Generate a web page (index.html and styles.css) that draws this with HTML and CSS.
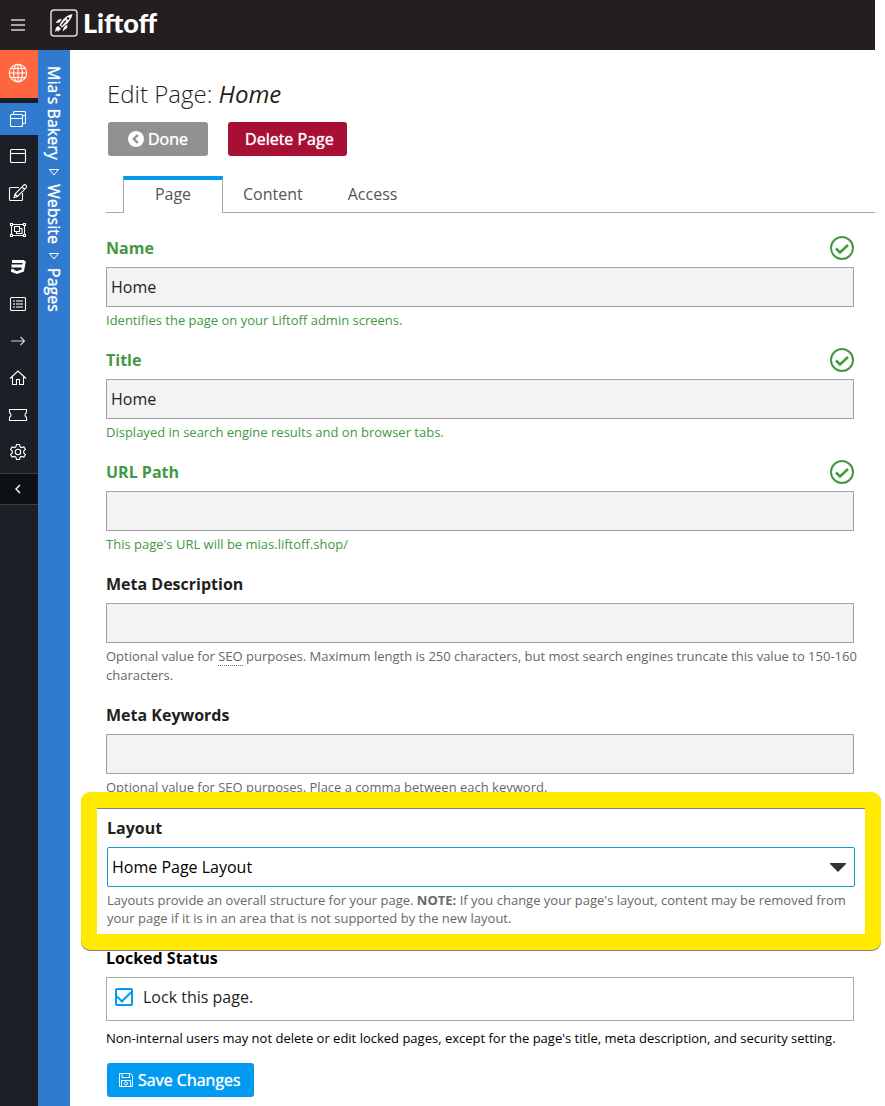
FILE: index.html
```html
<!DOCTYPE html>
<html lang="en">
<head>
<meta charset="utf-8">
<meta name="viewport" content="width=device-width, initial-scale=1">
<title>Edit Page: Home</title>
<link rel="stylesheet" href="styles.css">
</head>
<body>
<svg class="sprite" aria-hidden="true">
  <symbol id="ok" viewBox="0 0 24 24"><circle cx="12" cy="12" r="11"/><path d="M6 12.500l4 4L18 9" stroke-width="2.600"/></symbol>
</svg>
<div class="app">
  <header class="topbar">
    <button class="menu" type="button" aria-label="Menu">
      <svg width="14" height="12" viewBox="0 0 14 12"><path d="M0 1h14M0 6h14M0 11h14" stroke="#a6a4a5" stroke-width="2"/></svg>
    </button>
    <a class="logo" href="#">
      <svg width="28" height="28" viewBox="0 0 28 28" fill="none">
        <rect x="1" y="1" width="26" height="26" rx="3" stroke="#ddd" stroke-width="1.500"/>
        <path d="M22.500 5c-4.500 1-8 3.500-10.500 7L9.500 16l2.500 2.500 3.500-2.500C19 13 21.500 9.500 22.500 5z" fill="#fff"/>
        <path d="M12 10l-3.500.5L5.500 14l4-.5zM17.500 15.500L17 19l-4.500 3.500 1.500-4.500zM8.500 17L6 18.500l-1 4.500 2.500-2v2l3.500-3z" fill="#fff"/>
        <path d="M11.500 16.500l4.500-5" stroke="#231f20" stroke-width="1.200"/>
        <circle cx="18" cy="9.500" r="1.300" fill="#231f20"/>
      </svg>
      <span>Liftoff</span>
    </a>
  </header>

  <nav class="rail" aria-label="Tools">
    <a class="tool site" href="#" aria-label="Site"><svg width="20" height="20" viewBox="0 0 20 20"><circle cx="10" cy="10" r="8.700"/><ellipse cx="10" cy="10" rx="4.500" ry="8.700"/><path d="M10 1.300v17.400M1.300 10h17.400M2.800 5.500h14.400M2.800 14.500h14.400"/></svg></a>
    <a class="tool current" href="#" aria-label="Pages"><svg width="18" height="18" viewBox="0 0 18 18"><rect x="1.500" y="4.500" width="12" height="12" rx="1"/><path d="M1.500 8.500h12M4.500 4.500v-2a1 1 0 0 1 1-1h10a1 1 0 0 1 1 1v10a1 1 0 0 1-1 1h-2M13.500 5.500h3"/></svg></a>
    <a class="tool" href="#" aria-label="Layouts"><svg width="18" height="18" viewBox="0 0 18 18"><rect x="1.500" y="2.500" width="15" height="13" rx="1"/><path d="M1.500 6.500h15"/></svg></a>
    <a class="tool" href="#" aria-label="Edit"><svg width="20" height="18" viewBox="0 0 20 18"><path d="M11 3.500H2.500a1 1 0 0 0-1 1v11a1 1 0 0 0 1 1h11a1 1 0 0 0 1-1V9M15.500 1.300a1.800 1.800 0 0 1 2.500 0 1.800 1.800 0 0 1 0 2.500L9.500 12.500l-3.500 1.200 1-3.700zM14 3l2.500 2.500M7 10l2.500 2.500"/></svg></a>
    <a class="tool" href="#" aria-label="Blocks"><svg width="18" height="18" viewBox="0 0 18 18"><path d="M3.500 3.500h11M3.500 14.500h11M2.500 4.500v9M15.500 4.500v9M1.500 2.500h2v2h-2zM14.500 2.500h2v2h-2zM1.500 13.500h2v2h-2zM14.500 13.500h2v2h-2zM5.500 5.500h5v5h-5zM10.500 7.500h2.500v5H7.500v-2"/></svg></a>
    <a class="tool" href="#" aria-label="Stylesheets"><svg width="18" height="18" viewBox="0 0 18 18"><path d="M3 3.500h12.300M2.500 8h12M15.500 3l-1.800 9.500L8 14.500l-4.500-1.700.4-1.800" stroke-width="2.800"/></svg></a>
    <a class="tool" href="#" aria-label="Lists"><svg width="18" height="18" viewBox="0 0 18 18"><rect x="1.500" y="2.500" width="15" height="13" rx="1"/><path d="M4 6h2M4 9h2M4 12h2M7 6h7M7 9h7M7 12h7" stroke="#b9bcc0" stroke-width="1.500"/></svg></a>
    <a class="tool" href="#" aria-label="Redirects"><svg width="16" height="12" viewBox="0 0 16 12"><path d="M1 6h13.500M10.500 2l4 4-4 4" stroke="#d5d6d8"/></svg></a>
    <a class="tool" href="#" aria-label="Home"><svg width="18" height="18" viewBox="0 0 18 18"><path d="M1 9.500L9 2l8 7.500M3.500 8v7.500h4v-5h3v5h4V8"/></svg></a>
    <a class="tool" href="#" aria-label="Coupons"><svg width="20" height="14" viewBox="0 0 20 14"><path d="M1.500 1.500h17v3.200a2.500 2.500 0 0 0 0 4.600v3.200h-17V9.300a2.500 2.500 0 0 0 0-4.600z"/></svg></a>
    <a class="tool" href="#" aria-label="Settings"><svg width="18" height="18" viewBox="0 0 18 18"><circle cx="9" cy="9" r="2.700"/><path d="M7.500 1.500h3l.6 2.300 1.500.8 2.300-.7 1.500 2.600-1.700 1.600v1.800l1.700 1.600-1.500 2.600-2.300-.7-1.500.8-.6 2.300h-3l-.6-2.300-1.500-.8-2.300.7-1.500-2.600 1.700-1.600V8.100L1.600 6.500l1.500-2.600 2.300.7 1.500-.8z"/></svg></a>
    <button class="tool collapse" type="button" aria-label="Collapse"><svg width="8" height="10" viewBox="0 0 8 10"><path d="M6 1L2 5l4 4" stroke-width="1.400"/></svg></button>
  </nav>

  <nav class="crumbs" aria-label="Breadcrumb">
    <a href="#">Mia's Bakery</a>
    <svg width="12" height="8" viewBox="0 0 12 8"><path d="M1.500 1.500h9L6 7z"/></svg>
    <a href="#">Website</a>
    <svg width="12" height="8" viewBox="0 0 12 8"><path d="M1.500 1.500h9L6 7z"/></svg>
    <a href="#">Pages</a>
  </nav>

  <main class="main">
    <h1>Edit Page: <em>Home</em></h1>
    <div class="actions">
      <button class="btn done" type="button"><svg width="16" height="16" viewBox="0 0 16 16" fill="none"><circle cx="8" cy="8" r="8" fill="#fff"/><path d="M9.800 4L5.800 8l4 4" stroke="#919191" stroke-width="2.400"/></svg>Done</button>
      <button class="btn delete" type="button">Delete Page</button>
    </div>
    <div class="tabs" role="tablist">
      <button class="tab active" type="button" role="tab" aria-selected="true">Page</button>
      <button class="tab" type="button" role="tab" aria-selected="false">Content</button>
      <button class="tab" type="button" role="tab" aria-selected="false">Access</button>
    </div>
    <form class="form">
      <div class="field valid">
        <div class="head"><label for="name">Name</label><svg class="ok"><use href="#ok"/></svg></div>
        <input class="text" id="name" type="text" value="Home">
        <p class="help">Identifies the page on your Liftoff admin screens.</p>
      </div>
      <div class="field valid">
        <div class="head"><label for="title">Title</label><svg class="ok"><use href="#ok"/></svg></div>
        <input class="text" id="title" type="text" value="Home">
        <p class="help">Displayed in search engine results and on browser tabs.</p>
      </div>
      <div class="field valid">
        <div class="head"><label for="path">URL Path</label><svg class="ok"><use href="#ok"/></svg></div>
        <input class="text" id="path" type="text">
        <p class="help">This page's URL will be mias.liftoff.shop/</p>
      </div>
      <div class="field">
        <div class="head"><label for="desc">Meta Description</label></div>
        <input class="text" id="desc" type="text">
        <p class="help">Optional value for <abbr>SEO</abbr> purposes. Maximum length is 250 characters, but most search engines truncate this value to 150-160 characters.</p>
      </div>
      <div class="field">
        <div class="head"><label for="keys">Meta Keywords</label></div>
        <input class="text" id="keys" type="text">
        <p class="help">Optional value for <abbr>SEO</abbr> purposes. Place a comma between each keyword.</p>
      </div>
      <div class="highlight">
        <div class="head"><label for="layout">Layout</label></div>
        <div class="picker">
          <select id="layout"><option>Home Page Layout</option></select>
          <svg width="16" height="9" viewBox="0 0 16 9"><path d="M0 0h16v1L8 9 0 1z" fill="#333"/></svg>
        </div>
        <p class="help">Layouts provide an overall structure for your page. <strong>NOTE:</strong> If you change your page's layout, content may be removed from your page if it is in an area that is not supported by the new layout.</p>
      </div>
      <div class="locked">
        <div class="head">Locked Status</div>
        <label class="lock"><input type="checkbox" checked>Lock this page.</label>
        <p class="help">Non-internal users may not delete or edit locked pages, except for the page's title, meta description, and security setting.</p>
      </div>
      <button class="btn save" type="submit"><svg width="16" height="16" viewBox="0 0 16 16" fill="none" stroke="#fff"><path d="M1.500 1.500h11l2 2v11h-13zM4 1.500v4h7.500v-4M3.500 14.500v-6h9v6"/><circle cx="8" cy="11.500" r="1.500"/></svg>Save Changes</button>
    </form>
  </main>
</div>
</body>
</html>
```
FILE: styles.css
```css
* { box-sizing: border-box; }
body {
  margin: 0;
  background: #fff;
  color: #231f20;
  font: 16px/24px "Open Sans", "Noto Sans", sans-serif;
}
button, input, select { font: inherit; color: inherit; margin: 0; }
button { cursor: pointer; }
a { color: inherit; text-decoration: none; }
p, h1 { margin: 0; }
.sprite { position: absolute; width: 0; height: 0; }

.app {
  display: grid;
  grid-template-columns: 38px 32px minmax(0, 1fr);
  grid-template-rows: 50px auto;
  min-height: 100vh;
  padding-right: 10px;
}
.topbar {
  grid-column: 1 / -1;
  display: flex;
  align-items: center;
  background: #231f20;
}
.menu {
  display: flex;
  align-items: center;
  height: 50px;
  width: 50px;
  padding: 0 0 0 11px;
  border: 0;
  background: none;
}
.logo {
  display: flex;
  align-items: center;
  gap: 5px;
  margin-top: -4px;
  color: #fff;
  font: 900 27px/28px Lato, sans-serif;
}

.rail {
  display: flex;
  flex-direction: column;
  gap: 5px;
  background: #1b1f26;
}
.tool {
  display: flex;
  align-items: center;
  justify-content: center;
  height: 32px;
  padding: 0 2px 0 0;
}
.tool svg { fill: none; stroke: #fff; stroke-width: 1.1; }
.site { height: 48px; background: #ff6640; padding-bottom: 2px; }
.current { background: #307acf; }
.collapse {
  border: 0;
  border-top: 1px solid #3b3e43;
  border-bottom: 1px solid #3b3e43;
  background: #0e1114;
}

.crumbs {
  writing-mode: vertical-rl;
  display: flex;
  align-items: center;
  gap: 8px;
  padding: 16px 0;
  background: #307acf;
  color: #fff;
  font-weight: 500;
  text-shadow: 0 0 1px #fff;
}
.crumbs svg { fill: none; stroke: #fff; }

.main { padding: 28px 0 9px 36px; }
h1 { padding-left: 1px; font-size: 24px; line-height: 32px; font-weight: 300; }
h1 em { font-weight: 400; }
.actions { display: flex; gap: 20px; padding: 12px 0 20px 2px; }
.btn {
  display: inline-flex;
  align-items: center;
  justify-content: center;
  gap: 4px;
  height: 34px;
  border: 0;
  border-radius: 3px;
  color: #fff;
  font-weight: 500;
  text-shadow: 0 0 1px #fff;
  white-space: nowrap;
}
.done { padding: 0 20px; background: #919191; }
.delete { padding: 0 13px 0 17px; background: #a80f34; }
.save { padding: 0 13px 0 11px; margin: 15px 0 0 1px; background: #009bf0; }

.tabs {
  display: flex;
  height: 37px;
  padding-left: 17px;
  margin-bottom: 23px;
  box-shadow: inset 0 -1px #a8a8a8;
}
.tab {
  padding: 0 25px 2px 20px;
  border: 0;
  background: none;
  color: #555;
}
.tab.active {
  width: 100px;
  border: 1px solid #a8a8a8;
  border-top: 4px solid #009bf0;
  border-bottom: 0;
  background: #fff;
  padding: 0 0 6px;
}

.form { padding-right: 21px; }
.field + .field { margin-top: 18px; }
.head {
  display: flex;
  justify-content: space-between;
  align-items: center;
  height: 24px;
  margin-bottom: 7px;
  font-weight: 700;
}
.ok {
  width: 24px;
  height: 24px;
  fill: none;
  stroke: #439843;
  stroke-width: 2;
}
.text {
  display: block;
  width: 100%;
  height: 40px;
  padding: 0 4px;
  border: 1px solid #a0a0a0;
  border-radius: 0;
  background: #f3f3f3;
}
.help { margin: 4px -5px 0 0; font-size: 13px; line-height: 19px; color: #6b6667; }
.help abbr { border-bottom: 1px dotted #6b6667; }
.valid .head, .valid .help { color: #439843; }

.highlight {
  position: relative;
  margin: -5px -27px -4px -25px;
  padding: 8px 10px 7px;
  border: 16px solid #ffea00;
  border-radius: 9px;
  background: #fff;
  box-shadow: 0 1px #808080, inset 0 1px #808080;
}
.highlight .help { line-height: 18px; }
.picker { display: grid; align-items: center; }
.picker > * { grid-area: 1 / 1; }
.picker select {
  appearance: none;
  width: 100%;
  height: 40px;
  padding: 0 4px;
  border: 1px solid #1197dc;
  border-radius: 2px;
  background: #fff;
  color: #000;
}
.picker svg { justify-self: end; margin-right: 9px; pointer-events: none; }

.locked, .locked .help { color: #000; }
.lock {
  display: flex;
  align-items: center;
  gap: 10px;
  height: 44px;
  padding: 0 8px 4px;
  border: 1px solid #a8a8a8;
  color: #231f20;
}
.lock input {
  appearance: none;
  display: grid;
  place-items: center;
  width: 18px;
  height: 18px;
  border: 2px solid #009bf0;
  border-radius: 2px;
}
.lock input:checked::before {
  content: "";
  width: 12px;
  height: 6px;
  margin-bottom: 4px;
  border: solid #009bf0;
  border-width: 0 0 2px 2px;
  transform: rotate(-45deg);
}
.locked .help { margin-top: 8px; }
```
